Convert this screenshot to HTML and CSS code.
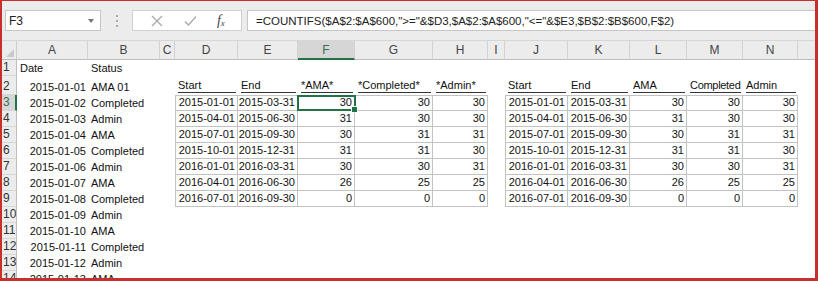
FILE: index.html
```html
<!DOCTYPE html>
<html>
<head>
<meta charset="utf-8">
<link rel="stylesheet" href="styles.css">
</head>
<body>
<div class="frame">
  <div class="toolbar">
    <div class="namebox"><span>F3</span><span class="dd"></span></div>
    <div class="dots"><i></i><i></i><i></i></div>
    <div class="fbtns">
      <svg class="ic" width="12" height="12" viewBox="0 0 12 12"><path d="M1 1L11 11M11 1L1 11" stroke="#a9a9a9" stroke-width="1.3" fill="none"/></svg>
      <svg class="ic" width="13" height="12" viewBox="0 0 13 12"><path d="M1 6.5L4.5 10L12 1.5" stroke="#a9a9a9" stroke-width="1.3" fill="none"/></svg>
      <span class="fx">f<sub>x</sub></span>
    </div>
    <div class="formula">=COUNTIFS($A$2:$A$600,"&gt;="&amp;$D3,$A$2:$A$600,"&lt;="&amp;$E3,$B$2:$B$600,F$2)</div>
  </div>
  <div class="sheet">
    <div class="row hdr">
      <div class="corner"><span class="tri"></span></div>
      <div class="ch">A</div><div class="ch">B</div><div class="ch">C</div><div class="ch">D</div><div class="ch">E</div>
      <div class="ch on">F</div><div class="ch">G</div><div class="ch">H</div><div class="ch">I</div><div class="ch">J</div>
      <div class="ch">K</div><div class="ch">L</div><div class="ch">M</div><div class="ch">N</div><div class="ch last"></div>
    </div>
    <div class="row">
      <div class="rh">1</div><div class="c">Date</div><div class="c">Status</div>
    </div>
    <div class="row r2">
      <div class="rh">2</div><div class="c r">2015-01-01</div><div class="c">AMA 01</div><div class="c"></div>
      <div class="c u"><span>Start</span></div><div class="c u"><span>End</span></div><div class="c u"><span>*AMA*</span></div><div class="c u"><span>*Completed*</span></div><div class="c u"><span>*Admin*</span></div>
      <div class="c"></div>
      <div class="c u"><span>Start</span></div><div class="c u"><span>End</span></div><div class="c u"><span>AMA</span></div><div class="c u"><span class="tight">Completed</span></div><div class="c u"><span>Admin</span></div>
    </div>
    <div class="row">
      <div class="rh on">3</div><div class="c r">2015-01-02</div><div class="c">Completed</div><div class="c"></div>
      <div class="c r t tl tt">2015-01-01</div><div class="c r t tt">2015-03-31</div><div class="c r t tt sel">30</div><div class="c r t tt">30</div><div class="c r t tt">30</div>
      <div class="c"></div>
      <div class="c r t tl tt">2015-01-01</div><div class="c r t tt">2015-03-31</div><div class="c r t tt">30</div><div class="c r t tt">30</div><div class="c r t tt">30</div>
    </div>
    <div class="row">
      <div class="rh">4</div><div class="c r">2015-01-03</div><div class="c">Admin</div><div class="c"></div>
      <div class="c r t tl">2015-04-01</div><div class="c r t">2015-06-30</div><div class="c r t">31</div><div class="c r t">30</div><div class="c r t">30</div>
      <div class="c"></div>
      <div class="c r t tl">2015-04-01</div><div class="c r t">2015-06-30</div><div class="c r t">31</div><div class="c r t">30</div><div class="c r t">30</div>
    </div>
    <div class="row">
      <div class="rh">5</div><div class="c r">2015-01-04</div><div class="c">AMA</div><div class="c"></div>
      <div class="c r t tl">2015-07-01</div><div class="c r t">2015-09-30</div><div class="c r t">30</div><div class="c r t">31</div><div class="c r t">31</div>
      <div class="c"></div>
      <div class="c r t tl">2015-07-01</div><div class="c r t">2015-09-30</div><div class="c r t">30</div><div class="c r t">31</div><div class="c r t">31</div>
    </div>
    <div class="row">
      <div class="rh">6</div><div class="c r">2015-01-05</div><div class="c">Completed</div><div class="c"></div>
      <div class="c r t tl">2015-10-01</div><div class="c r t">2015-12-31</div><div class="c r t">31</div><div class="c r t">31</div><div class="c r t">30</div>
      <div class="c"></div>
      <div class="c r t tl">2015-10-01</div><div class="c r t">2015-12-31</div><div class="c r t">31</div><div class="c r t">31</div><div class="c r t">30</div>
    </div>
    <div class="row">
      <div class="rh">7</div><div class="c r">2015-01-06</div><div class="c">Admin</div><div class="c"></div>
      <div class="c r t tl">2016-01-01</div><div class="c r t">2016-03-31</div><div class="c r t">30</div><div class="c r t">30</div><div class="c r t">31</div>
      <div class="c"></div>
      <div class="c r t tl">2016-01-01</div><div class="c r t">2016-03-31</div><div class="c r t">30</div><div class="c r t">30</div><div class="c r t">31</div>
    </div>
    <div class="row">
      <div class="rh">8</div><div class="c r">2015-01-07</div><div class="c">AMA</div><div class="c"></div>
      <div class="c r t tl">2016-04-01</div><div class="c r t">2016-06-30</div><div class="c r t">26</div><div class="c r t">25</div><div class="c r t">25</div>
      <div class="c"></div>
      <div class="c r t tl">2016-04-01</div><div class="c r t">2016-06-30</div><div class="c r t">26</div><div class="c r t">25</div><div class="c r t">25</div>
    </div>
    <div class="row">
      <div class="rh">9</div><div class="c r">2015-01-08</div><div class="c">Completed</div><div class="c"></div>
      <div class="c r t tl">2016-07-01</div><div class="c r t">2016-09-30</div><div class="c r t">0</div><div class="c r t">0</div><div class="c r t">0</div>
      <div class="c"></div>
      <div class="c r t tl">2016-07-01</div><div class="c r t">2016-09-30</div><div class="c r t">0</div><div class="c r t">0</div><div class="c r t">0</div>
    </div>
    <div class="row"><div class="rh">10</div><div class="c r">2015-01-09</div><div class="c">Admin</div></div>
    <div class="row"><div class="rh">11</div><div class="c r">2015-01-10</div><div class="c">AMA</div></div>
    <div class="row"><div class="rh">12</div><div class="c r">2015-01-11</div><div class="c">Completed</div></div>
    <div class="row"><div class="rh">13</div><div class="c r">2015-01-12</div><div class="c">Admin</div></div>
    <div class="row"><div class="rh">14</div><div class="c r">2015-01-13</div><div class="c">AMA</div></div>
  </div>
</div>
</body>
</html>
```
FILE: styles.css
```css
* { box-sizing: border-box; }
html, body { margin: 0; padding: 0; background: #fff; }
.frame {
  width: 818px; height: 281px; overflow: hidden;
  border-style: solid; border-color: #c8302c;
  border-width: 1px 3px 3px 2px;
  font-family: "Liberation Sans", Arial, sans-serif;
  color: #1a1a1a;
}
.toolbar {
  height: 40px; background: #ececec;
  display: flex; align-items: center; padding-left: 3px;
  border-bottom: 1px solid #d6d6d6;
}
.namebox {
  width: 96px; height: 21px; background: #fff; border: 1px solid #c6c6c6;
  display: flex; align-items: center; justify-content: space-between;
  padding: 0 6px 0 3px; font-size: 12px; color: #222;
}
.dd { width: 0; height: 0; border-left: 3px solid transparent; border-right: 3px solid transparent; border-top: 4px solid #777; }
.dots { width: 31px; display: flex; flex-direction: column; align-items: center; gap: 3px; }
.dots i { width: 2px; height: 2px; background: #aaa; display: block; }
.fbtns {
  width: 110px; height: 21px; background: #fff; border: 1px solid #d0d0d0;
  display: flex; align-items: center; justify-content: space-around; padding: 0 6px 0 8px;
}
.fx { font-family: "Liberation Serif", serif; font-style: italic; font-size: 14px; color: #444; line-height: 1; }
.fx sub { font-size: 9px; vertical-align: -1px; }
.formula {
  flex: 1; height: 21px; margin-left: 5px; background: #fff; border: 1px solid #c6c6c6; border-right: none;
  display: flex; align-items: center; padding-left: 8px; font-size: 11.5px; color: #222; white-space: nowrap;
}
.sheet { background: #fff; }
.row {
  display: grid;
  grid-template-columns: 15px 71px 72px 15px 63px 60px 57px 78px 55px 17px 63px 62px 57px 56px 55px 1fr;
  height: 16px;
}
.row.r2 { height: 19px; }
.row.hdr { height: 19px; }
.corner { background: #ececec; border-right: 1px solid #cfcfcf; border-bottom: 1px solid #bdbdbd; position: relative; }
.tri { position: absolute; right: 2px; bottom: 2px; width: 0; height: 0; border-left: 8px solid transparent; border-bottom: 8px solid #c9c9c9; }
.ch {
  background: #ececec; border-right: 1px solid #d2d2d2; border-bottom: 1px solid #bdbdbd;
  display: flex; align-items: center; justify-content: center; font-size: 12px; color: #444;
}
.ch.last { border-right: none; }
.ch.on { background: #d6d6d6; border-bottom: 2px solid #217346; color: #3b6e50; }
.rh {
  background: #ececec; border-right: 1px solid #bdbdbd; border-bottom: 1px solid #d6d6d6;
  font-size: 12px; color: #333; display: flex; align-items: flex-end; padding: 0 0 1px 1px; line-height: 14px;
  overflow: hidden;
}
.rh.on { background: #d6d6d6; border-right: 2px solid #217346; color: #3b6e50; }
.c {
  display: flex; align-items: flex-end; padding: 0 2px 1px 3px; font-size: 11px; line-height: 13px;
  white-space: nowrap; overflow: hidden; color: #111;
}
.c.r { justify-content: flex-end; padding: 0 2px 1px 2px; }
.c.u { padding: 0 2px 2px 3px; }
.c.u span { display: block; width: 100%; border-bottom: 1px solid #333; padding-bottom: 1px; line-height: 12px; overflow: hidden; }
.c.u span.tight { letter-spacing: -0.3px; }
.t { border-right: 1px solid #c3c3c3; border-bottom: 1px solid #c3c3c3; }
.tl { border-left: 1px solid #c3c3c3; }
.tt { border-top: 1px solid #c3c3c3; }
.sel { position: relative; overflow: visible; }
.sel::after {
  content: ""; position: absolute; left: -1px; top: -1px; right: -2px; bottom: -1px;
  border: 2px solid #217346;
}
.sel::before {
  content: ""; position: absolute; right: -4px; bottom: -3px; width: 5px; height: 5px;
  background: #217346; border: 1px solid #fff; z-index: 2;
}
```
